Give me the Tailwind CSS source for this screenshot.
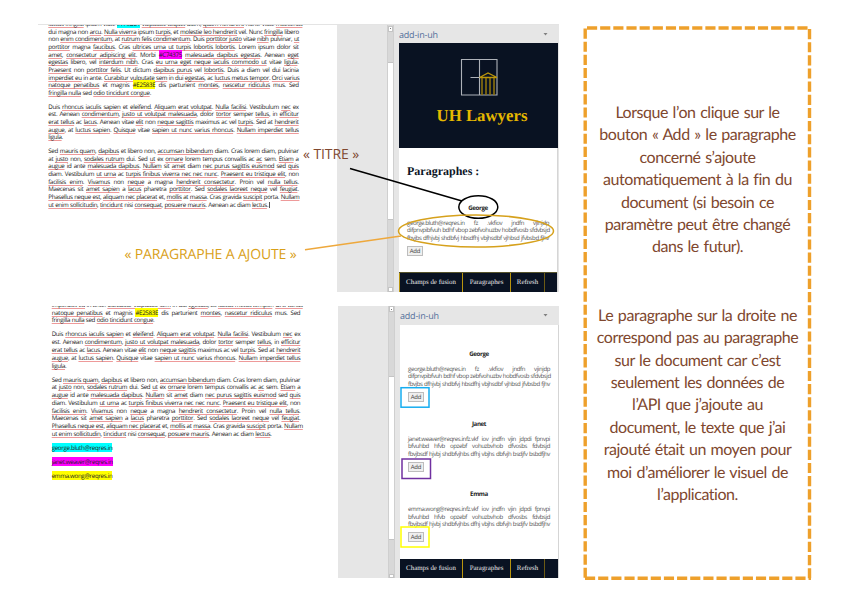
<!DOCTYPE html>
<html lang="fr">
<head>
<meta charset="utf-8">
<title>add-in-uh</title>
<script src="https://cdn.jsdelivr.net/npm/@tailwindcss/browser@4"></script>
</head>
<body class="bg-white">
<main class="relative flex w-[852px] h-[609px] overflow-hidden pt-[24px] pl-[38px] [text-rendering:geometricPrecision]">
  <div class="flex w-[521px] flex-col gap-[14px]">
    <section class="flex h-[268px] overflow-hidden border-t border-[#e4e4e4]">
      <div id="doc1" class="-mt-[5px] flex w-[299px] shrink-0 flex-col gap-[6.05px] pr-[38.3px] pl-[10.3px] font-['Open_Sans',sans-serif] text-[6.2px] tracking-[-0.33px] [word-spacing:0.3px] leading-[7.65px] text-[#222]"></div>
      <div class="flex w-[222px] bg-[#e6e6e6]">
        <div class="ml-[50px] flex w-[7px] flex-col border-x border-[#cfcfcf] bg-[#d8d8d8]">
          <div class="mt-px flex h-[6px] items-center justify-center border border-[#c4c4c4] bg-white"><i class="size-[1px] bg-[#777]"></i></div>
          <div class="mt-[30px] h-[161px] border-y border-[#c4c4c4] bg-white"></div>
          <div class="mt-[67px] h-[5px] border border-[#c4c4c4] bg-white"></div>
        </div>
        <div class="ml-[5px] flex w-[160px] flex-col">
          <div class="flex h-[18px] shrink-0 items-center justify-between pt-[1px] pr-[11px] font-['Open_Sans',sans-serif] text-[9px] leading-none text-[#54709b]"><span class="tracking-[-0.2px]">add-in-uh</span><svg width="5" height="3"><path d="M0.500 0h4L2.500 2.500z" fill="#808080"/></svg></div>
          <div class="flex h-[249px] w-[159px] flex-col border-r border-[#d5d5d5] bg-white">
            <div class="flex h-[105px] w-[159px] shrink-0 flex-col items-center bg-[#091222] pt-[14.5px]">
              <svg class="ml-[1px] shrink-0" width="38" height="38" viewBox="0 0 38 38" fill="none"><path d="M1.5 1.5h35.5v35.5H1.5zM19.5 1.5V37M10.5 19.5h9" stroke="#aeb2b9" stroke-width="1.1"/><path d="M19.5 19.5L28 15l9 4.5M20 19.5h17" stroke="#bd970b" stroke-width="1.3"/><path d="M22 20v17M26 20v17M30 20v17M34 20v17" stroke="#94780d" stroke-width="1.5"/></svg>
              <div class="mt-[10.5px] pl-[7px] font-['Liberation_Serif',serif] text-[16.8px] leading-[20px] font-bold whitespace-nowrap text-[#e5b800]">UH Lawyers</div>
            </div>
            <div class="flex flex-col px-[8px] pt-[15px] font-['Open_Sans',sans-serif]">
              <h2 class="font-['Liberation_Serif',serif] text-[12px] leading-[16px] font-bold text-[#0c1626]">Paragraphes :</h2>
              <h3 class="mt-[25px] text-center text-[6.2px] leading-[8px] font-bold tracking-[-0.4px] text-[#222]">George</h3>
              <div class="mt-[6.5px] text-[6.1px] leading-[7.5px] tracking-[-0.42px] [word-spacing:0.2px] text-[#555]" data-lines="george"></div>
              <div class="mt-[5px] flex h-[10px] w-[16px] items-center justify-center border border-[#bdbdbd] bg-[#efefef] text-[6px] leading-none tracking-[-0.2px] text-[#444]">Add</div>
            </div>
            <nav class="mt-auto flex h-[20px] shrink-0 items-stretch border-t border-[#56532b] bg-[#091222] font-['Liberation_Serif',serif] text-[6.9px] leading-[19px] text-[#e6e6e6]">
              <span class="w-[63px] border-l border-[#b8940e] text-center">Champs de fusion</span><span class="w-[48px] border-l border-[#b8940e] text-center">Paragraphes</span><span class="w-[34px] border-l border-[#b8940e] text-center">Refresh</span><span class="border-l border-[#6b5a15]"></span>
            </nav>
          </div>
        </div>
      </div>
    </section>

    <section class="flex h-[272px] overflow-hidden">
      <div id="doc2" class="-mt-[5.1px] flex w-[300px] shrink-0 flex-col gap-[6.2px] pr-[37.7px] pl-[13.7px] font-['Open_Sans',sans-serif] text-[6.2px] tracking-[-0.33px] [word-spacing:0.3px] leading-[7.78px] text-[#222]"></div>
      <div class="flex w-[221px] bg-[#e6e6e6]">
        <div class="ml-[50px] flex w-[7px] flex-col border-x border-[#cfcfcf] bg-[#d8d8d8]">
          <div class="flex h-[6px] items-center justify-center border border-[#c4c4c4] bg-white"><i class="size-[1px] bg-[#777]"></i></div>
          <div class="mt-[64px] h-[164px] border-y border-[#c4c4c4] bg-white"></div>
          <div class="mt-[34px] h-[4px] border border-[#c4c4c4] bg-white"></div>
        </div>
        <div class="ml-[5px] flex w-[159px] flex-col">
          <div class="flex h-[19px] shrink-0 items-center justify-between pr-[11px] font-['Open_Sans',sans-serif] text-[9px] leading-none text-[#54709b]"><span class="tracking-[-0.2px]">add-in-uh</span><svg width="5" height="3"><path d="M0.500 0h4L2.500 2.500z" fill="#808080"/></svg></div>
          <div class="flex h-[253px] w-[159px] flex-col border-r border-[#d5d5d5] bg-white">
            <div class="flex flex-col gap-[18px] px-[8px] pt-[24.5px] font-['Open_Sans',sans-serif]">
              <article class="h-[52.3px]">
                <h3 class="text-center text-[6.2px] leading-[8px] font-bold tracking-[-0.4px] text-[#222]">George</h3>
                <div class="mt-[7px] text-[6.1px] leading-[7.6px] tracking-[-0.42px] [word-spacing:0.2px] text-[#555]" data-lines="george"></div>
                <div class="mt-[4.5px] flex h-[10px] w-[16px] items-center justify-center border border-[#bdbdbd] bg-[#efefef] text-[6px] leading-none tracking-[-0.2px] text-[#444]">Add</div>
              </article>
              <article class="h-[52.3px]">
                <h3 class="text-center text-[6.2px] leading-[8px] font-bold tracking-[-0.4px] text-[#222]">Janet</h3>
                <div class="mt-[7px] text-[6.1px] leading-[7.6px] tracking-[-0.42px] [word-spacing:0.2px] text-[#555]" data-lines="janet"></div>
                <div class="mt-[4.5px] flex h-[10px] w-[16px] items-center justify-center border border-[#bdbdbd] bg-[#efefef] text-[6px] leading-none tracking-[-0.2px] text-[#444]">Add</div>
              </article>
              <article class="h-[52.3px]">
                <h3 class="text-center text-[6.2px] leading-[8px] font-bold tracking-[-0.4px] text-[#222]">Emma</h3>
                <div class="mt-[7px] text-[6.1px] leading-[7.6px] tracking-[-0.42px] [word-spacing:0.2px] text-[#555]" data-lines="emma"></div>
                <div class="mt-[4.5px] flex h-[10px] w-[16px] items-center justify-center border border-[#bdbdbd] bg-[#efefef] text-[6px] leading-none tracking-[-0.2px] text-[#444]">Add</div>
              </article>
            </div>
            <nav class="mt-auto flex h-[19px] shrink-0 items-stretch bg-[#091222] font-['Liberation_Serif',serif] text-[6.9px] leading-[19px] text-[#e6e6e6]">
              <span class="w-[62px] text-center">Champs de fusion</span><span class="w-[48px] border-l border-[#b8940e] text-center">Paragraphes</span><span class="w-[34px] border-l border-[#b8940e] text-center">Refresh</span><span class="border-l border-[#6b5a15]"></span>
            </nav>
          </div>
        </div>
      </div>
    </section>
  </div>

  <aside class="ml-[24px] flex w-[229px] flex-col gap-[46px] pt-[78px] text-center font-[Lato,sans-serif] text-[16px] leading-[22.4px] tracking-[-0.45px] [word-spacing:1px] whitespace-nowrap text-[#80482f]">
    <p>Lorsque l’on clique sur le<br>bouton « Add » le paragraphe<br>concerné s’ajoute<br>automatiquement à la fin du<br>document (si besoin ce<br>paramètre peut être changé<br>dans le futur).</p>
    <p>Le paragraphe sur la droite ne<br>correspond pas au paragraphe<br>sur le document car c’est<br>seulement les données de<br>l’API que j’ajoute au<br>document, le texte que j’ai<br>rajouté était un moyen pour<br>moi d’améliorer le visuel de<br>l’application.</p>
  </aside>

  <!-- annotations drawn over the two captures -->
  <svg class="absolute inset-0" width="852" height="609" fill="none">
    <g stroke="#eea02b" stroke-width="3.4" stroke-dasharray="10.15 3">
      <path d="M587 28H808"/><path d="M585.2 28.5V579"/><path d="M809.5 29V580"/><path d="M585 578.3H811"/>
    </g>
    <path d="M350 168.5L462 201" stroke="#000" stroke-width="1.5"/>
    <ellipse cx="478.3" cy="207" rx="19.5" ry="11.3" stroke="#000" stroke-width="1.5"/>
    <path d="M305 249.8L401 236" stroke="#eea83c" stroke-width="1.5"/>
    <ellipse cx="476" cy="231" rx="77.5" ry="16" stroke="#d6a11c" stroke-width="1.5"/>
    <rect x="401" y="387.7" width="28" height="19.5" stroke="#16adf0" stroke-width="1.5"/>
    <rect x="402" y="459" width="28.5" height="19.5" stroke="#7030a0" stroke-width="1.5"/>
    <rect x="401" y="527" width="28" height="20" stroke="#ff0" stroke-width="1.5"/>
  </svg>
  <div class="absolute top-[146px] left-[303px] font-['Open_Sans',sans-serif] text-[14px] leading-[18px] tracking-[-0.1px] whitespace-nowrap text-[#80482f]">« TITRE »</div>
  <div class="absolute top-[246px] left-[124.5px] font-['Open_Sans',sans-serif] text-[14px] leading-[18px] tracking-[-0.15px] whitespace-nowrap text-[#d9a018]">« PARAGRAPHE A AJOUTE »</div>
</main>

<script>
// Underscores wrap misspelt words, {colour:text} a highlighted run.
// A leading "|" marks a row that keeps its natural width.
const lorem1 = [
  "_luctus fringilla_ ipsum vitae {c:#7F0DE1} _vulputate aliquet_ diam, _quam hendrerit_ nunc. Vitae _maecenas_",
  "dui magna non _arcu_. _Nulla viverra_ ipsum _turpis_, et _molestie leo hendrerit_ vel. Nunc _fringilla_ libero",
  "non _enim condimentum_, at _rutrum felis condimentum_. Duis _porttitor justo_ vitae _nibh_ pulvinar, _ut_",
  "_porttitor_ magna _faucibus_. Cras _ultrices urna ut turpis lobortis lobortis_. Lorem ipsum dolor sit",
  "_amet_, _consectetur adipiscing elit_. Morbi {m:#C74375} _malesuada dapibus egestas_. Aenean _eget_",
  "_egestas_ libero, vel _interdum nibh_. Cras _eu urna eget neque iaculis commodo ut_ vitae _ligula_.",
  "_Praesent_ non _porttitor felis_. Ut dictum _dapibus purus_ vel _lobortis_. Duis a diam vel dui lacinia",
  "_imperdiet eu_ in ante. _Curabitur vulputate sem_ in dui _egestas_, ac _luctus metus tempor_. _Orci varius_",
  "_natoque penatibus_ et magnis {y:#E2583E} dis parturient _montes_, _nascetur ridiculus_ mus. Sed",
  "|_fringilla nulla_ sed _odio tincidunt congue_."];
const lorem2 = [
  "Duis _rhoncus iaculis sapien_ et _eleifend_. _Aliquam erat volutpat_. _Nulla facilisi_. Vestibulum _nec_ ex",
  "est. Aenean _condimentum_, _justo ut volutpat malesuada_, dolor _tortor_ semper _tellus_, in _efficitur_",
  "_erat tellus_ ac _lacus_. Aenean vitae _elit_ non _neque sagittis_ maximus ac vel _turpis_. Sed at _hendrerit_",
  "_augue_, at _luctus sapien_. _Quisque_ vitae _sapien ut nunc varius rhoncus_. _Nullam imperdiet tellus_",
  "|_ligula_."];
const lorem3 = [
  "Sed _mauris quam_, _dapibus_ et libero non, _accumsan bibendum_ diam. Cras lorem diam, pulvinar",
  "at _justo_ non, _sodales rutrum_ dui. Sed _ut_ ex _ornare_ lorem tempus convallis ac _ac_ sem. _Etiam_ a",
  "_augue_ id ante _malesuada dapibus_. _Nullam_ sit _amet_ diam _nec purus sagittis euismod_ sed _quis_",
  "diam. Vestibulum _ut urna_ ac _turpis finibus viverra nec nec nunc_. _Praesent eu tristique elit_, non",
  "_facilisis enim_. _Vivamus_ non _neque_ a magna _hendrerit consectetur_. Proin vel _nulla tellus_.",
  "Maecenas sit _amet sapien_ a _lacus_ pharetra _porttitor_. Sed _sodales laoreet neque_ vel _feugiat_.",
  "_Phasellus neque est_, _aliquam nec placerat_ et, _mollis_ at _massa_. Cras gravida _suscipit_ porta. _Nullam_",
  "|_ut enim sollicitudin_, _tincidunt_ nisi _consequat_, _posuere mauris_. Aenean ac diam _lectus_."];
const emails = ["|{c:george.bluth@reqres.in}", "|{m:janet.weaver@reqres.in}", "|{y:emma.wong@reqres.in}"];
const panel = {
  george: ["george.bluth@reqres.in fz .vkfiov jndfn vjinjdp", "difpnvpibfvuh bdhf vbop zebfvohuzbv hobdfvosb sfdvbsjd", "fbvjbs dfhjvbj shdbfvj hbsdfhj vbjhsdbf vjhbsd jfvbsbd fjhv"],
  janet: ["janet.weaver@reqres.infz.vkf iov jndfn vjin jdpdi fpnvpi", "bfvuhbd hfvb opzebf vohuzbvhob dfvosbs fdvbsjd", "fbvjbsdf hjvbj shdbfvjhbs dfhj vbjhs dbfvjh bsdjfv bsbdfjhv"],
  emma: ["emma.wong@reqres.infz.vkf iov jndfn vjin jdpdi fpnvpi", "bfvuhbd hfvb opzebf vohuzbvhob dfvosbs fdvbsjd", "fbvjbsdf hjvbj shdbfvjhbs dfhj vbjhs dbfvjh bsdjfv bsbdfjhv"]
};
const marks = { c: "bg-[#00ffff]", m: "bg-[#ff00ff]", y: "bg-[#ffff00]" };
const rich = s => s
  .replace(/\{(\w):([^}]+)\}/g, (_, k, t) => `<span class="${marks[k]}">${t}</span>`)
  .replace(/_([^_]+)_/g, '<span class="underline decoration-[#ee9a9a] decoration-1 underline-offset-1 [text-decoration-skip-ink:none]">$1</span>');

function lines(list) {
  const p = document.createElement("p");
  for (const raw of list) {
    const row = document.createElement("span");
    row.className = raw[0] === "|" ? "block whitespace-nowrap" : "block whitespace-nowrap text-justify [text-align-last:justify]";
    row.innerHTML = rich(raw.replace("|", ""));
    p.append(row);
  }
  return p;
}
document.getElementById("doc1").append(lines(lorem1), lines(lorem2), lines(lorem3));
// text cursor at the end of the first capture
document.querySelector("#doc1 p:last-child > span:last-child").insertAdjacentHTML("beforeend", '<i class="ml-[0.5px] inline-block h-[6px] w-px bg-[#555] align-middle"></i>');
document.getElementById("doc2").append(lines(lorem1.slice(7)), lines(lorem2), lines(lorem3), ...emails.map(e => lines([e])));
document.querySelectorAll("[data-lines]").forEach(d => d.append(lines(panel[d.dataset.lines])));
</script>
</body>
</html>
